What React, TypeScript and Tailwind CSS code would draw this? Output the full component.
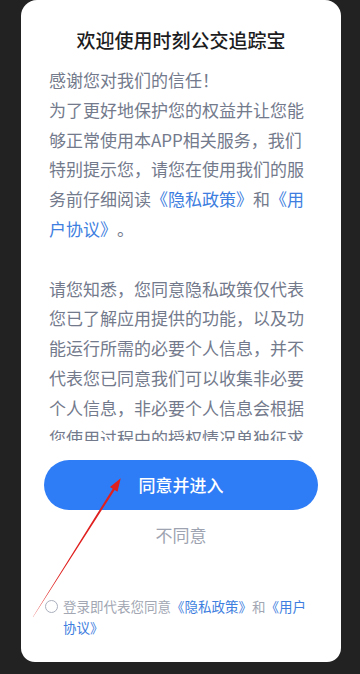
import React from 'react'

const font = { fontFamily: '"Noto Sans CJK SC", "Noto Sans", sans-serif' }

export default function App() {
  return (
    <div
      className="relative min-h-[674px] w-[360px] bg-[#222222] overflow-hidden [text-spacing-trim:space-all]"
      style={font}
    >
      <div className="ml-[21px] w-[320px] h-[662px] bg-white rounded-t-[16px] rounded-b-[14px] flex flex-col">
        <h1 className="pt-[26px] text-center text-[19px] leading-[28px] font-medium text-[#1c1c1e]">
          欢迎使用时刻公交追踪宝
        </h1>

        <div className="mt-[11px] h-[376px] overflow-hidden px-[28px] text-[17px] leading-[29.8px] text-[#737a8c]">
          <p>感谢您对我们的信任！</p>
          <p>
            为了更好地保护您的权益并让您能够正常使用本APP相关服务，我们特别提示您，请您在使用我们的服务前仔细阅读
            <span className="text-[#3d7ee0]">《隐私政策》</span>和
            <span className="text-[#3d7ee0]">《用户协议》</span>。
          </p>
          <p className="mt-[29.8px]">
            请您知悉，您同意隐私政策仅代表您已了解应用提供的功能，以及功能运行所需的必要个人信息，并不代表您已同意我们可以收集非必要个人信息，非必要个人信息会根据您使用过程中的授权情况单独征求您的同意。
          </p>
        </div>

        <button className="mt-[19px] mx-[23px] h-[50px] rounded-full bg-[#2f7df6] text-white text-[17px] font-medium">
          同意并进入
        </button>

        <button className="mt-[13px] text-[17px] leading-[24px] text-[#9da3b0]">不同意</button>

        <div className="mt-[49px] ml-[24px] flex items-start">
          <span className="mt-[4px] w-[13px] h-[13px] rounded-full border-[1.5px] border-[#a9afbd] shrink-0" />
          <p className="ml-[5px] w-[250px] text-[13.5px] leading-[21px] text-[#a2a7b3]">
            登录即代表您同意<span className="text-[#3d7ee0]">《隐私政策》</span>和
            <span className="text-[#3d7ee0]">《用户协议》</span>
          </p>
        </div>
      </div>

      {/* red annotation arrow */}
      <svg className="absolute left-0 top-0 pointer-events-none" width="360" height="674" viewBox="0 0 360 674">
        <polygon
          fill="#e0201f"
          points="32.9,616.9 112.7,488.7 109.9,486.9 120.7,478.3 117.5,491.7 114.7,489.9 33.1,617.1"
        />
      </svg>
    </div>
  )
}
